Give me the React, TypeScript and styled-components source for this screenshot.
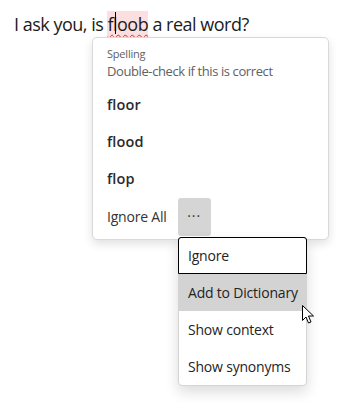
import styled, { createGlobalStyle } from 'styled-components';

const GlobalStyle = createGlobalStyle`
  body {
    margin: 0;
    background: #ffffff;
    font-family: 'Open Sans', 'Noto Sans', sans-serif;
  }
`;

const Page = styled.div`
  position: relative;
  width: 344px;
  height: 417px;
  overflow: hidden;
`;

const Sentence = styled.p`
  margin: 0;
  padding: 12px 0 0 14px;
  font-size: 18px;
  line-height: 24px;
  color: #1b1b1b;
  letter-spacing: -0.5px;
`;

const Misspelled = styled.span`
  position: relative;
  background: #fcdfe0;
  padding: 1px 0 3px;
  text-decoration: underline wavy #d13438;
  text-decoration-thickness: 1px;
  text-underline-offset: 3px;
`;

const Caret = styled.span`
  position: absolute;
  left: 8px;
  top: 1px;
  width: 1px;
  height: 22px;
  background: #000;
`;

const Card = styled.div`
  position: absolute;
  left: 92px;
  top: 37px;
  width: 237px;
  height: 203px;
  box-sizing: border-box;
  border: 1px solid #d9d9d9;
  border-radius: 5px;
  background: #fff;
  box-shadow: 0 4px 10px rgba(0, 0, 0, 0.12);
  display: flex;
  flex-direction: column;
  padding: 8px 0 0 14px;
`;

const Label = styled.div`
  font-size: 11px;
  line-height: 16px;
  color: #616161;
  letter-spacing: -0.2px;
`;

const Hint = styled.div`
  font-size: 13px;
  line-height: 18px;
  color: #616161;
  letter-spacing: -0.4px;
`;

const Suggestions = styled.div`
  display: flex;
  flex-direction: column;
  margin-top: 6px;
`;

const Suggestion = styled.div`
  height: 37px;
  display: flex;
  align-items: center;
  font-size: 14.5px;
  font-weight: 600;
  color: #2b2b2b;
  letter-spacing: 0.1px;
`;

const Footer = styled.div`
  display: flex;
  align-items: center;
  gap: 11px;
  height: 39px;
`;

const IgnoreAll = styled.span`
  font-size: 14px;
  color: #333;
  letter-spacing: -0.2px;
`;

const MoreButton = styled.div`
  width: 33px;
  height: 38px;
  border-radius: 3px;
  background: #d5d5d5;
  display: flex;
  align-items: center;
  justify-content: center;
  font-size: 14px;
  letter-spacing: 1px;
  color: #333;
  padding-bottom: 3px;
  box-sizing: border-box;
`;

const Menu = styled.div`
  position: absolute;
  left: 178px;
  top: 237px;
  width: 129px;
  box-sizing: border-box;
  border: 1px solid #d4d4d4;
  border-radius: 4px;
  background: #fff;
  box-shadow: 0 6px 14px rgba(0, 0, 0, 0.14);
  display: flex;
  flex-direction: column;
`;

const MenuItem = styled.div<{ $focused?: boolean; $hover?: boolean }>`
  height: 37px;
  box-sizing: border-box;
  display: flex;
  align-items: center;
  padding-left: 9px;
  font-size: 14px;
  color: #242424;
  letter-spacing: -0.2px;
  background: ${({ $hover }) => ($hover ? '#d3d3d3' : 'transparent')};
  border: ${({ $focused }) => ($focused ? '1.5px solid #000' : 'none')};
  border-radius: ${({ $focused }) => ($focused ? '3px 3px 0 0' : '0')};
  margin: ${({ $focused }) => ($focused ? '-1px -1px 0' : '0')};
`;

const Pointer = styled.svg`
  position: absolute;
  left: 302px;
  top: 305px;
`;

const menuItems = ['Ignore', 'Add to Dictionary', 'Show context', 'Show synonyms'];

export default function App() {
  return (
    <Page>
      <GlobalStyle />
      <Sentence>
        I ask you, is <Misspelled>f<Caret />loob</Misspelled> a real word?
      </Sentence>
      <Card>
        <Label>Spelling</Label>
        <Hint>Double-check if this is correct</Hint>
        <Suggestions>
          {['floor', 'flood', 'flop'].map((w) => (
            <Suggestion key={w}>{w}</Suggestion>
          ))}
        </Suggestions>
        <Footer>
          <IgnoreAll>Ignore All</IgnoreAll>
          <MoreButton>···</MoreButton>
        </Footer>
      </Card>
      <Menu>
        {menuItems.map((item, i) => (
          <MenuItem key={item} $focused={i === 0} $hover={i === 1}>
            {item}
          </MenuItem>
        ))}
      </Menu>
      <Pointer width="13" height="20" viewBox="0 0 13 20">
        <path
          d="M0.5 0.5 L0.5 15.5 L4 12 L6.5 18 L9 17 L6.5 11 L11.5 11 Z"
          fill="#fff"
          stroke="#000"
          strokeWidth="1"
          strokeLinejoin="round"
        />
      </Pointer>
    </Page>
  );
}
